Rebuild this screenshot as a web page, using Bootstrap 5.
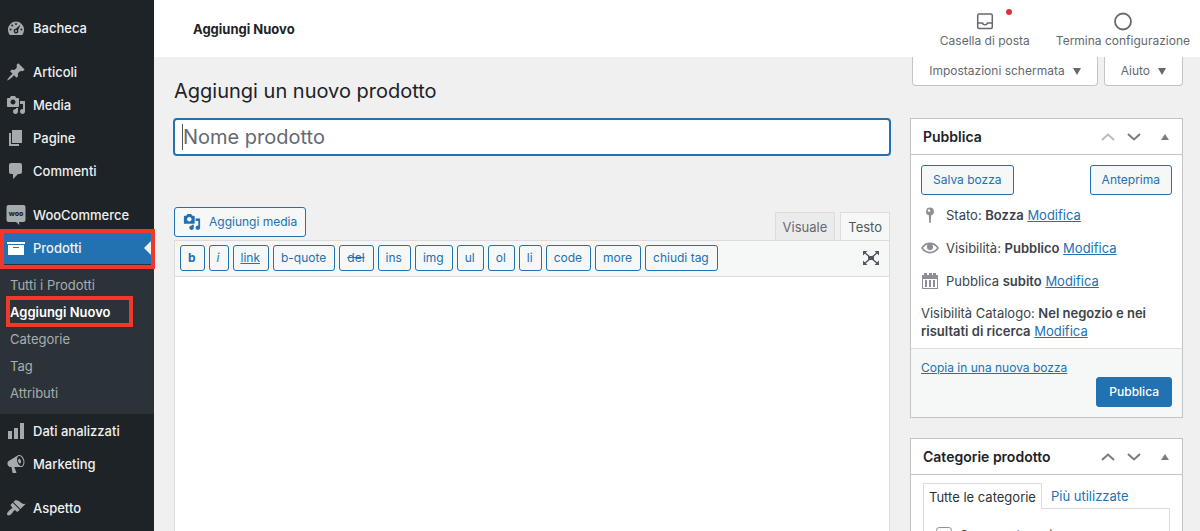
<!DOCTYPE html>
<html lang="it">
<head>
<meta charset="utf-8">
<meta name="viewport" content="width=device-width, initial-scale=1">
<title>Aggiungi un nuovo prodotto</title>
<link href="https://cdn.jsdelivr.net/npm/bootstrap@5.3.0/dist/css/bootstrap.min.css" rel="stylesheet">
<style>
:root{--wp-blue:#2271b1;--wp-line:#c3c4c7;--wp-dark:#1d2327;--wp-mark:#f0392b}
body{font-family:Inter,"Liberation Sans",sans-serif;font-size:13px;line-height:18px;color:#3c434a;background:#f0f0f1}
svg{fill:currentColor;flex:none;display:block}
a{color:var(--wp-blue)}
h1,h2{margin:0;color:var(--wp-dark)}
.side{flex:0 0 154px;background:var(--wp-dark);padding-top:11px;font-size:13px}
.side ul{list-style:none;margin:0;padding:0}
.side a{color:#f0f0f1;text-decoration:none}
.side .side-link{display:flex;align-items:center;gap:7px;height:33px;padding-left:6px;font-weight:500}
.side-link svg{color:#a7aaad}
.side-gap{margin-top:11px}
.side-current{position:relative;background:var(--wp-blue)}
.side-current svg{color:#fff}
.side-current::before{content:"";position:absolute;right:2px;top:9px;border:8px solid transparent;border-right-color:#f0f0f1;border-left:0}
.marked{position:relative}
.marked::after{content:"";position:absolute;border:4px solid var(--wp-mark);pointer-events:none}
.side-current.marked::after{inset:-2px -1px -5px 0}
.side .side-sub{background:#2c3338;padding:8px 0 7px}
.side-sub a{display:block;padding-left:10px;line-height:27px;color:#a9adb1}
.side-sub a.marked{color:#fff;font-weight:600}
.side-sub a.marked::after{inset:-3px 21px -1px 6px}
.main-col{min-width:0}
.topbar{min-height:57px;background:#fff;padding:0 10px 0 39px}
.topbar h2{font-size:13px;font-weight:700;line-height:18px}
.top-tools{gap:26px}
.top-tool{border:0;background:none;padding:3px 0 0;color:#646970;display:flex;flex-direction:column;align-items:center;gap:1px;position:relative;font-size:12px}
.top-dot{position:absolute;right:18px;top:1px;width:6px;height:6px;border-radius:50%;background:#d63638}
.page-body{padding:0 17px 0 20px}
.page-head{min-height:61px}
.page-head h1{font-size:20px;font-weight:400;line-height:30px;padding-top:19px}
.meta-tabs{gap:6px}
.meta-tab{border:1px solid var(--wp-line);border-top:0;border-radius:0 0 4px 4px;background:#fff;color:#646970;height:29px;padding:0 16px;display:flex;align-items:center;gap:8px;font-size:12px}
.cols{display:grid;grid-template-columns:minmax(0,1fr) 273px;gap:20px;flex:1 1 auto}
.title-wrap{margin:0 -1px 51px}
.title-input{display:block;height:38px;border:2px solid var(--wp-blue);border-radius:4px;font-size:20px;padding:0 8px;color:#2c3338;width:100%;background:#fff linear-gradient(#50575e,#50575e) 7px center/1px 26px no-repeat;outline:0}
.title-input::placeholder{color:#646970;opacity:1}
.wp-btn{border:1px solid var(--wp-blue);border-radius:3px;background:#f6f7f7;color:var(--wp-blue);height:30px;padding:0 11px;font-size:12px;line-height:18px;display:inline-flex;align-items:center}
.wp-btn.solid{background:var(--wp-blue);color:#fff;padding:0 12px;font-weight:500}
.media-btn{margin-bottom:3px}
.ed-tabs{gap:5px}
.ed-tab{border:1px solid #dcdcde;border-bottom:0;height:28px;padding:0 7px;background:#ebebec;color:#646970}
.ed-tab.on{background:#f6f7f7;height:29px;margin-bottom:-1px;color:#50575e}
.ed-box{border:1px solid #dcdcde;background:#fff;min-height:292px}
.ed-bar{background:#f6f7f7;border-bottom:1px solid #dcdcde;padding:4px 5px 5px;min-height:36px;gap:4px}
.ed-bar .wp-btn{height:26px;padding:0 8px 0 7px;line-height:16px}
.ed-bar .expand{border:0;background:none;padding:0 4px;color:#50575e}
.ed-area{border:0;resize:none;width:100%;outline:0}
.panel{border:1px solid var(--wp-line);background:#fff;margin-bottom:20px}
.panel-head{border-bottom:1px solid var(--wp-line);height:36px;padding:0 13px 0 12px}
.panel-head h2{font-size:14px;font-weight:600;line-height:20px}
.panel-head button{border:0;background:none;padding:0;color:#787c82}
.panel-main{padding:10px 10px 8px}
.panel b{font-weight:600}
.save-row{margin-bottom:3px}
.status-row{display:flex;align-items:center;gap:7px;height:33px}
.status-row svg{color:#8c8f94}
.catalog-row{padding-top:7px}
.panel-foot{background:#f6f7f7;border-top:1px solid #dcdcde;padding:10px;font-size:12px}
.cat-tab{border:1px solid #dcdcde;border-bottom:0;background:#fff;height:26px;padding:0 5px;margin-bottom:-1px;color:#2c3338}
.cat-alt{border:0;background:none;color:var(--wp-blue);padding:0 9px}
.cat-list{border:1px solid #dcdcde;padding:17px 12px;min-height:60px}
.cat-list input{width:16px;height:16px;margin:0;border-color:#8c8f94}
</style>
</head>
<body>
<svg width="0" height="0" class="position-absolute" aria-hidden="true"><defs>
<symbol id="i-media" viewBox="0 0 20 20"><path d="M13 11V4c0-.55-.45-1-1-1h-1.67L9 1H5L3.67 3H2c-.55 0-1 .45-1 1v7c0 .55.45 1 1 1h10c.55 0 1-.45 1-1zM7 4.5c1.38 0 2.5 1.12 2.5 2.5S8.38 9.5 7 9.5 4.5 8.38 4.5 7 5.62 4.5 7 4.5zM14 6h5v10.5c0 1.38-1.12 2.5-2.5 2.5S14 17.88 14 16.5s1.12-2.5 2.5-2.5c.17 0 .34.02.5.05V9h-3V6zm-4 8.05V13h2v3.5c0 1.38-1.12 2.5-2.5 2.5S7 17.88 7 16.5 8.12 14 9.5 14c.17 0 .34.02.5.05z"/></symbol>
<symbol id="i-up" viewBox="0 0 14 8"><path d="M1 7l6-5.5L13 7" fill="none" stroke="currentColor" stroke-width="2"/></symbol>
<symbol id="i-down" viewBox="0 0 14 8"><path d="M1 1l6 5.5L13 1" fill="none" stroke="currentColor" stroke-width="2"/></symbol>
<symbol id="i-tri" viewBox="0 0 8 6"><path d="M4 0l4 6H0z"/></symbol>
<symbol id="i-caret" viewBox="0 0 8 7"><path d="M0 0h8L4 7z"/></symbol>
</defs></svg>
<div class="d-flex vh-100 overflow-hidden">
<nav class="side" aria-label="Menu principale">
<ul>
<li><a class="side-link" href="#"><svg width="20" height="20" viewBox="0 0 20 20"><path d="M3.800 17h12.400c1.300-1.500 1.800-3.500 1.800-5.400a8 8 0 1 0-16 0c0 1.900.5 3.900 1.800 5.400z"/><g fill="#1d2327"><circle cx="10" cy="6" r="1"/><circle cx="6.200" cy="7.600" r="1"/><circle cx="4.600" cy="11.400" r="1"/><circle cx="15.400" cy="11.400" r="1"/><path d="M14.500 6.400l-2.400 5.800a2.300 2.300 0 1 1-2.300-1.400z"/></g><circle cx="10" cy="13" r="1"/></svg>Bacheca</a></li>
<li class="side-gap"><a class="side-link" href="#"><svg width="20" height="20" viewBox="0 0 20 20"><path d="M10.440 3.020l1.820-1.820 6.360 6.350-1.830 1.820c-1.050-.68-2.480-.57-3.410.36l-.75.75c-.92.93-1.040 2.350-.35 3.410l-1.830 1.820-2.410-2.410-2.800 2.790c-.42.42-3.380 2.710-3.800 2.290s1.860-3.390 2.280-3.810l2.790-2.790L4.100 9.360l1.830-1.820c1.050.69 2.480.57 3.400-.36l.75-.75c.93-.92 1.050-2.350.36-3.410z"/></svg>Articoli</a></li>
<li><a class="side-link" href="#"><svg width="20" height="20"><use href="#i-media"/></svg>Media</a></li>
<li><a class="side-link" href="#"><svg width="20" height="20" viewBox="0 0 20 20"><path d="M6 15V2h10v13H6zm-1 1h8v2H3V5h2v11z"/></svg>Pagine</a></li>
<li><a class="side-link" href="#"><svg width="20" height="20" viewBox="0 0 20 20"><path d="M5 2h9c1.100 0 2 .9 2 2v7c0 1.100-.9 2-2 2h-2l-5 5v-5H5c-1.100 0-2-.9-2-2V4c0-1.100.9-2 2-2z"/></svg>Commenti</a></li>
<li class="side-gap"><a class="side-link" href="#"><svg width="20" height="20" viewBox="0 0 20 20"><path d="M2.500 0h15a2 2 0 0 1 2 2v13a2 2 0 0 1-2 2H13l.5 3-3.500-3H2.500a2 2 0 0 1-2-2V2a2 2 0 0 1 2-2z"/><text x="10" y="11" text-anchor="middle" font-size="7" font-weight="800" fill="#1d2327" aria-hidden="true">woo</text></svg>WooCommerce</a></li>
<li><a class="side-link side-current marked" href="#" aria-current="true"><svg width="20" height="20" viewBox="0 0 20 20"><path d="M19 4v2H1V4h18zM2 7h16v10H2V7zm11 3V9H7v1h6z"/></svg>Prodotti</a>
<ul class="side-sub">
<li><a href="#">Tutti i Prodotti</a></li>
<li><a class="marked" href="#" aria-current="page">Aggiungi Nuovo</a></li>
<li><a href="#">Categorie</a></li>
<li><a href="#">Tag</a></li>
<li><a href="#">Attributi</a></li>
</ul></li>
<li><a class="side-link" href="#"><svg width="20" height="20" viewBox="0 0 20 20"><path d="M18 18V2h-4v16h4zm-6 0V7H8v11h4zm-6 0v-8H2v8h4z"/></svg>Dati analizzati</a></li>
<li><a class="side-link" href="#"><svg width="20" height="20" viewBox="0 0 20 20"><path fill-rule="evenodd" d="M18.150 5.940c.46 1.620.38 3.220-.02 4.480-.42 1.280-1.260 2.180-2.300 2.480-.16.06-.26.06-.4.06-.06.02-.12.02-.18.02-.06.02-.14.02-.22.02h-6.800l2.220 5.500c.02.14-.06.26-.14.34-.08.1-.24.16-.34.16H6.950c-.1 0-.26-.06-.34-.16-.08-.08-.16-.2-.14-.34l-1-5.500H4.250l-.02-.02c-.5.06-1.080-.18-1.540-.62s-.88-1.080-1.060-1.880c-.24-.8-.2-1.560-.02-2.200.18-.62.58-1.080 1.060-1.300l.02-.02 9-5.400c.1-.06.18-.1.24-.16.06-.04.14-.08.24-.12.16-.08.28-.12.5-.18 1.040-.3 2.240.1 3.220.98s1.840 2.240 2.260 3.860zm-2.580 5.980h-.02c.4-.1.74-.34 1.040-.7.58-.7.86-1.760.86-3.040 0-.64-.1-1.300-.28-1.980-.34-1.360-1.020-2.500-1.780-3.240s-1.680-1.100-2.460-.88c-.82.22-1.400.96-1.700 2-.32 1.040-.28 2.360.06 3.720.38 1.360 1 2.500 1.800 3.240.78.74 1.620 1.100 2.480.88zm-2.540-7.080c.22-.04.42-.02.62.04.38.16.76.48 1.020 1s.42 1.200.42 1.780c0 .3-.04.56-.12.8-.18.48-.44.84-.86.94-.34.1-.8-.06-1.140-.4s-.64-.86-.78-1.500c-.18-.62-.12-1.240.02-1.720s.48-.84.82-.94z"/></svg>Marketing</a></li>
<li class="side-gap"><a class="side-link" href="#"><svg width="20" height="20" viewBox="0 0 20 20"><path d="M14.480 11.060L7.410 3.990l1.500-1.500c.5-.56 2.300-.47 3.510.32 1.210.8 1.430 1.280 2.910 2.100 1.180.64 2.450 1.260 4.450.85zm-.71.71L6.700 4.700 4.930 6.470c-.39.39-.39 1.020 0 1.410l1.060 1.060c.39.39.39 1.030 0 1.420-.6.6-1.430 1.110-2.210 1.690-.35.26-.7.53-1.010.84C1.430 14.230.4 16.080 1.400 17.070c.99 1 2.840-.03 4.180-1.360.31-.31.58-.66.85-1.020.57-.78 1.080-1.610 1.690-2.210.39-.39 1.020-.39 1.410 0l1.060 1.060c.39.39 1.020.39 1.410 0z"/></svg>Aspetto</a></li>
</ul>
</nav>
<div class="main-col d-flex flex-column flex-grow-1">
<header class="topbar d-flex align-items-center justify-content-between">
<h2>Aggiungi Nuovo</h2>
<div class="top-tools d-flex">
<button type="button" class="top-tool"><svg width="20" height="20" viewBox="0 0 20 20"><path fill="none" stroke="currentColor" stroke-width="1.500" d="M4.200 3h11.600a1.500 1.500 0 0 1 1.500 1.500v11.600a1.500 1.500 0 0 1-1.500 1.500H4.200a1.500 1.500 0 0 1-1.500-1.500V4.500A1.500 1.500 0 0 1 4.200 3zM3 12h4.500c.3 1.300 1.300 1.800 2.500 1.800s2.200-.5 2.500-1.800H17"/></svg><span class="top-dot"></span>Casella di posta</button>
<button type="button" class="top-tool"><svg width="20" height="20" viewBox="0 0 20 20"><circle cx="10" cy="10.500" r="8" fill="none" stroke="currentColor" stroke-width="1.800"/></svg>Termina configurazione</button>
</div>
</header>
<main class="page-body d-flex flex-column flex-grow-1">
<div class="page-head d-flex justify-content-between align-items-start">
<h1>Aggiungi un nuovo prodotto</h1>
<div class="meta-tabs d-flex">
<button type="button" class="meta-tab">Impostazioni schermata <svg width="8" height="7"><use href="#i-caret"/></svg></button>
<button type="button" class="meta-tab">Aiuto <svg width="8" height="7"><use href="#i-caret"/></svg></button>
</div>
</div>
<div class="cols">
<section class="d-flex flex-column">
<div class="title-wrap"><input class="title-input" type="text" placeholder="Nome prodotto" aria-label="Nome prodotto"></div>
<div class="d-flex justify-content-between align-items-end">
<button type="button" class="wp-btn media-btn gap-2 ps-2 pe-2"><svg width="18" height="18"><use href="#i-media"/></svg>Aggiungi media</button>
<div class="ed-tabs d-flex align-items-end"><button type="button" class="ed-tab">Visuale</button><button type="button" class="ed-tab on">Testo</button></div>
</div>
<div class="ed-box flex-grow-1 d-flex flex-column">
<div class="ed-bar d-flex flex-wrap align-items-center">
<button type="button" class="wp-btn fw-bold">b</button>
<button type="button" class="wp-btn fst-italic">i</button>
<button type="button" class="wp-btn text-decoration-underline">link</button>
<button type="button" class="wp-btn">b-quote</button>
<button type="button" class="wp-btn text-decoration-line-through">del</button>
<button type="button" class="wp-btn">ins</button>
<button type="button" class="wp-btn">img</button>
<button type="button" class="wp-btn">ul</button>
<button type="button" class="wp-btn">ol</button>
<button type="button" class="wp-btn">li</button>
<button type="button" class="wp-btn">code</button>
<button type="button" class="wp-btn">more</button>
<button type="button" class="wp-btn">chiudi tag</button>
<button type="button" class="expand ms-auto" aria-label="Schermo intero"><svg width="18" height="16" viewBox="0 0 18 16"><path d="M1 1h4.500L1 5.500zM17 1h-4.500L17 5.500zM1 15h4.500L1 10.500zM17 15h-4.500l4.500-4.500zM6 6h6v4H6z"/><path d="M2 2l14 12M16 2L2 14" fill="none" stroke="currentColor" stroke-width="1.400"/></svg></button>
</div>
<textarea class="ed-area flex-grow-1" aria-label="Descrizione"></textarea>
</div>
</section>
<aside>
<section class="panel">
<div class="panel-head d-flex align-items-center"><h2 class="me-auto">Pubblica</h2>
<button type="button" class="me-2 opacity-50" aria-label="Sposta su"><svg width="14" height="8"><use href="#i-up"/></svg></button>
<button type="button" class="ms-1 me-3" aria-label="Sposta giù"><svg width="14" height="8"><use href="#i-down"/></svg></button>
<button type="button" class="ms-1" aria-label="Comprimi"><svg width="8" height="6"><use href="#i-tri"/></svg></button></div>
<div class="panel-main">
<div class="save-row d-flex justify-content-between"><button type="button" class="wp-btn">Salva bozza</button><button type="button" class="wp-btn">Anteprima</button></div>
<div class="status-row"><svg width="18" height="18" viewBox="0 0 18 18"><path fill-rule="evenodd" d="M9 1.500a4 4 0 0 1 1.200 7.800l-.5 7.700H8.300l-.5-7.700A4 4 0 0 1 9 1.500zm-1 1.800a1.300 1.300 0 1 0 0 2.600 1.300 1.300 0 0 0 0-2.600z"/></svg><span>Stato: <b>Bozza</b> <a href="#">Modifica</a></span></div>
<div class="status-row"><svg width="18" height="18" viewBox="0 0 20 20"><path d="M19.700 9.400C17.700 6 14 3.900 10 3.900S2.300 6 .3 9.400L0 10l.3.6c2 3.400 5.700 5.500 9.700 5.500s7.700-2.100 9.700-5.500l.3-.6-.3-.6zM10 14.100c-3.100 0-6-1.600-7.700-4.100C3.600 8 5.700 6.600 8 6.100c-.9.600-1.500 1.700-1.500 2.900 0 1.900 1.600 3.500 3.500 3.500s3.500-1.600 3.500-3.500c0-1.200-.6-2.300-1.500-2.900 2.300.5 4.400 1.900 5.700 3.900-1.700 2.500-4.600 4.100-7.700 4.100z"/></svg><span>Visibilità: <b>Pubblico</b> <a href="#">Modifica</a></span></div>
<div class="status-row"><svg width="18" height="18" viewBox="0 0 18 18"><path fill-rule="evenodd" d="M1 3h2V1h3v2h2V1h3v2h1V1h3v2h2v14H1zm1 4v9h14V7zM4 8h2v7H4zm4 0h2v7H8zm4 0h2v7h-2z"/></svg><span>Pubblica <b>subito</b> <a href="#">Modifica</a></span></div>
<div class="catalog-row">Visibilità Catalogo: <b>Nel negozio e nei risultati di ricerca</b> <a href="#">Modifica</a></div>
</div>
<div class="panel-foot"><a href="#">Copia in una nuova bozza</a><div class="d-flex justify-content-end"><button type="submit" class="wp-btn solid">Pubblica</button></div></div>
</section>
<section class="panel">
<div class="panel-head d-flex align-items-center"><h2 class="me-auto">Categorie prodotto</h2>
<button type="button" class="me-2" aria-label="Sposta su"><svg width="14" height="8"><use href="#i-up"/></svg></button>
<button type="button" class="ms-1 me-3" aria-label="Sposta giù"><svg width="14" height="8"><use href="#i-down"/></svg></button>
<button type="button" class="ms-1" aria-label="Comprimi"><svg width="8" height="6"><use href="#i-tri"/></svg></button></div>
<div class="p-2 mx-1">
<div class="d-flex"><button type="button" class="cat-tab">Tutte le categorie</button><button type="button" class="cat-alt">Più utilizzate</button></div>
<div class="cat-list"><label class="d-flex align-items-center gap-2"><input class="form-check-input" type="checkbox">Senza categoria</label></div>
</div>
</section>
</aside>
</div>
</main>
</div>
</div>
<script src="https://cdn.jsdelivr.net/npm/bootstrap@5.3.0/dist/js/bootstrap.bundle.min.js"></script>
</body>
</html>
